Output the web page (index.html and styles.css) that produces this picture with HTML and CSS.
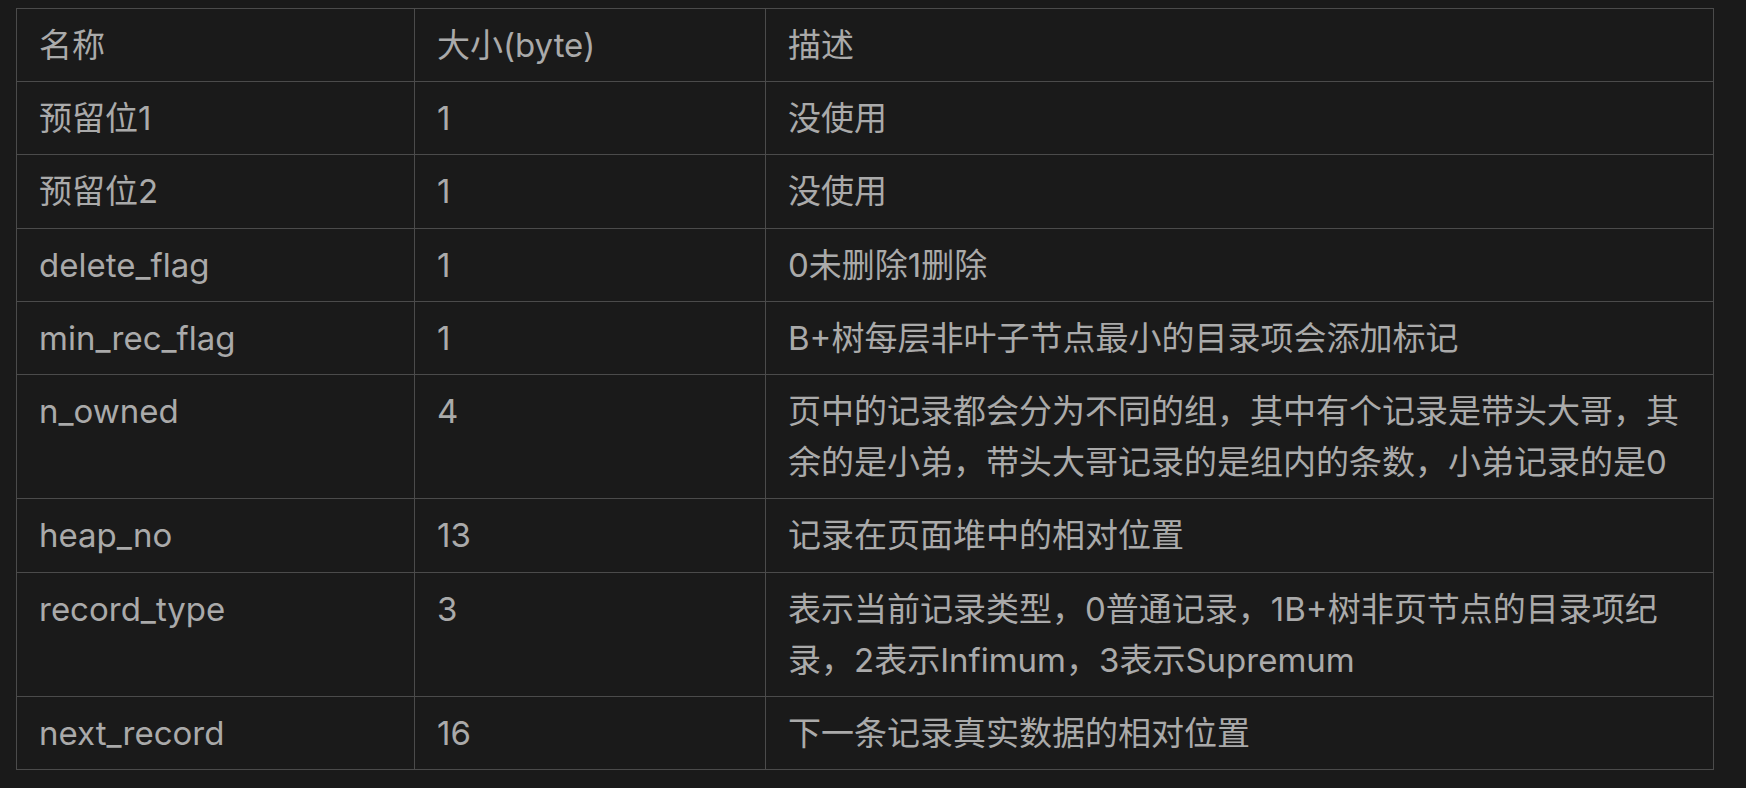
FILE: index.html
```
<!DOCTYPE html>
<html lang="zh-CN">
<head>
<meta charset="utf-8">
<title>记录头信息</title>
<link rel="stylesheet" href="styles.css">
</head>
<body>
<div class="page">
  <table class="record-table">
    <colgroup>
      <col class="col-name">
      <col class="col-size">
      <col class="col-desc">
    </colgroup>
    <thead>
      <tr><th>名称</th><th>大小(byte)</th><th>描述</th></tr>
    </thead>
    <tbody>
      <tr><td>预留位1</td><td>1</td><td>没使用</td></tr>
      <tr><td>预留位2</td><td>1</td><td>没使用</td></tr>
      <tr><td>delete_flag</td><td>1</td><td>0未删除1删除</td></tr>
      <tr><td>min_rec_flag</td><td>1</td><td>B+树每层非叶子节点最小的目录项会添加标记</td></tr>
      <tr><td>n_owned</td><td>4</td><td>页中的记录都会分为不同的组，其中有个记录是带头大哥，其余的是小弟，带头大哥记录的是组内的条数，小弟记录的是0</td></tr>
      <tr><td>heap_no</td><td>13</td><td>记录在页面堆中的相对位置</td></tr>
      <tr><td>record_type</td><td>3</td><td>表示当前记录类型，0普通记录，1B+树非页节点的目录项纪录，2表示Infimum，3表示Supremum</td></tr>
      <tr><td>next_record</td><td>16</td><td>下一条记录真实数据的相对位置</td></tr>
    </tbody>
  </table>
</div>
</body>
</html>
```
FILE: styles.css
```
html, body {
  margin: 0;
  padding: 0;
  background: #1a1a1a;
}

.page {
  padding: 8px 33px 0 16px;
}

.record-table {
  width: 1697px;
  border-collapse: collapse;
  table-layout: fixed;
  font-family: Inter, "Noto Sans CJK SC", sans-serif;
  font-size: 33px;
  line-height: 51.2px;
  color: #aaaaaa;
}

.col-name { width: 398px; }
.col-size { width: 351px; }
.col-desc { width: 948px; }

.record-table th,
.record-table td {
  border: 1px solid #4b4b4b;
  padding: 11px 16px 10px 22px;
  text-align: left;
  vertical-align: top;
  font-weight: 400;
}
```
